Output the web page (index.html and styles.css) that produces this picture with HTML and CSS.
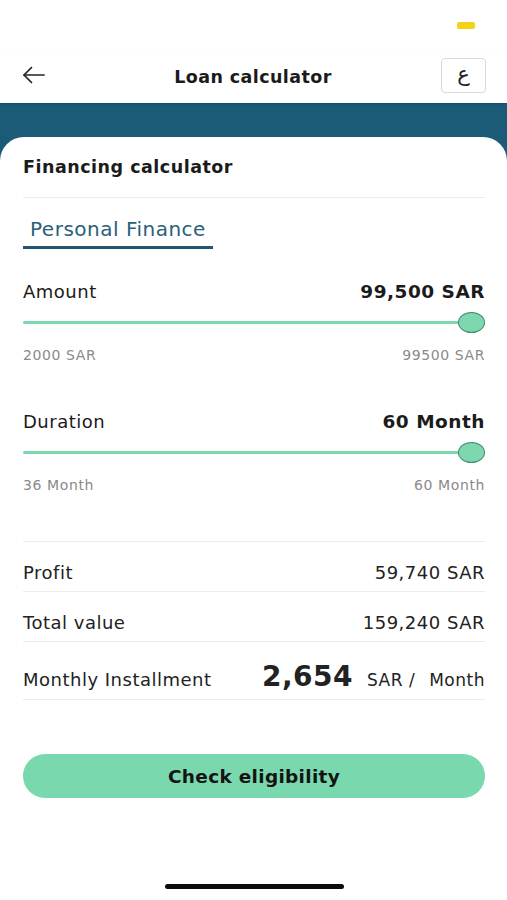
FILE: index.html
```html
<!DOCTYPE html>
<html lang="en">
<head>
    <meta charset="UTF-8">
    <meta name="viewport" content="width=device-width, initial-scale=1.0">
    <title>Loan calculator</title>
    <link rel="stylesheet" href="styles.css">
</head>
<body>
    <div class="status-bar">
        <span class="battery"></span>
    </div>

    <header class="top-bar">
        <button class="back-btn" aria-label="Back">
            <svg width="24" height="18" viewBox="0 0 24 18" fill="none" stroke="#222" stroke-width="1.7" stroke-linecap="round" stroke-linejoin="round">
                <path d="M22 9H2"/>
                <path d="M9.5 1.5L2 9l7.5 7.5"/>
            </svg>
        </button>
        <h1 class="title">Loan calculator</h1>
        <button class="lang-btn">ع</button>
    </header>

    <div class="hero">
        <main class="card">
            <h2 class="card-title">Financing calculator</h2>

            <div class="tabs">
                <span class="tab active">Personal Finance</span>
            </div>

            <section class="field">
                <div class="field-head">
                    <span class="field-label">Amount</span>
                    <span class="field-value">99,500 SAR</span>
                </div>
                <div class="slider">
                    <div class="track"></div>
                    <div class="thumb"></div>
                </div>
                <div class="range-labels">
                    <span>2000 SAR</span>
                    <span>99500 SAR</span>
                </div>
            </section>

            <section class="field field-second">
                <div class="field-head">
                    <span class="field-label">Duration</span>
                    <span class="field-value">60 Month</span>
                </div>
                <div class="slider">
                    <div class="track"></div>
                    <div class="thumb"></div>
                </div>
                <div class="range-labels">
                    <span>36 Month</span>
                    <span>60 Month</span>
                </div>
            </section>

            <div class="summary">
                <div class="summary-row">
                    <span>Profit</span>
                    <span>59,740 SAR</span>
                </div>
                <div class="summary-row">
                    <span>Total value</span>
                    <span>159,240 SAR</span>
                </div>
                <div class="summary-row installment">
                    <span>Monthly Installment</span>
                    <span class="installment-value">
                        <strong>2,654</strong>
                        <span class="unit">SAR /</span>
                        <span class="unit">Month</span>
                    </span>
                </div>
            </div>

            <button class="primary-btn">Check eligibility</button>

            <div class="home-indicator"></div>
        </main>
    </div>
</body>
</html>
```

FILE: styles.css
```css
* {
    box-sizing: border-box;
}

body {
    margin: 0;
    padding: 0;
    width: 507px;
    height: 900px;
    overflow: hidden;
    background-color: #fff;
    color: #1b1b1b;
    font-family: 'DejaVu Sans', sans-serif;
    letter-spacing: 0.5px;
}

button {
    font-family: inherit;
    letter-spacing: inherit;
    cursor: pointer;
}

.status-bar {
    height: 50px;
    display: flex;
    justify-content: flex-end;
    padding: 22px 32px 0 0;
}

.battery {
    width: 18px;
    height: 7px;
    border-radius: 2px;
    background-color: #f4d316;
}

.top-bar {
    position: relative;
    z-index: 1;
    height: 53px;
    display: grid;
    grid-template-columns: 1fr auto 1fr;
    align-items: center;
    padding: 0 21px 0 20px;
    background-color: #fff;
    box-shadow: 0 1px 2px rgba(0, 0, 0, 0.18);
}

.back-btn {
    justify-self: start;
    width: 28px;
    height: 28px;
    padding: 0;
    display: flex;
    align-items: center;
    justify-content: center;
    border: none;
    background: none;
    margin-top: -4px;
}

.title {
    margin: 0;
    font-size: 17.5px;
    font-weight: 700;
    color: #1b1b1b;
    letter-spacing: 0.4px;
}

.lang-btn {
    justify-self: end;
    width: 45px;
    height: 35px;
    padding: 0 0 3px;
    border: 1px solid #d9d9d9;
    border-radius: 4px;
    background-color: #fff;
    font-size: 21px;
    color: #222;
    margin-top: -2px;
    letter-spacing: 0;
}

.hero {
    background-color: #1b5b78;
    padding-top: 34px;
}

.card {
    min-height: 763px;
    background-color: #fff;
    border-radius: 24px 24px 0 0;
    padding: 0 22px 0 23px;
}

.card-title {
    margin: 0;
    padding: 18px 0 18px;
    font-size: 17.5px;
    line-height: 24px;
    font-weight: 700;
    border-bottom: 1px solid #ececec;
}

.tabs {
    display: flex;
    padding-top: 18px;
}

.tab {
    padding: 0 7px 4px;
    font-size: 20px;
    line-height: 26px;
    color: #2b6079;
}

.tab.active {
    border-bottom: 3px solid #22566e;
}

.field {
    margin-top: 32px;
}

.field-second {
    margin-top: 47px;
}

.field-head {
    display: flex;
    justify-content: space-between;
    align-items: center;
    line-height: 22px;
    font-size: 18px;
}

.field-value {
    font-weight: 700;
    font-size: 18.5px;
}

.slider {
    margin-top: 7px;
    height: 24px;
    display: flex;
    align-items: center;
}

.track {
    flex: 1;
    height: 3px;
    border-radius: 2px;
    background-color: #7dd8b0;
}

.thumb {
    flex: none;
    width: 27px;
    height: 21px;
    margin-left: -2px;
    border-radius: 50%;
    background-color: #7dd8b0;
    border: 1.5px solid #3f8a68;
}

.range-labels {
    margin-top: 12px;
    display: flex;
    justify-content: space-between;
    font-size: 14px;
    line-height: 18px;
    letter-spacing: 0.6px;
    color: #8a8a8a;
}

.summary {
    margin-top: 47px;
    border-top: 1px solid #ececec;
}

.summary-row {
    display: flex;
    justify-content: space-between;
    align-items: baseline;
    padding: 20px 0 8px;
    font-size: 18px;
    line-height: 21px;
    color: #222;
    border-bottom: 1px solid #ececec;
}

.summary-row.installment {
    padding: 20px 0 7px;
}

.installment-value {
    display: flex;
    align-items: baseline;
}

.installment-value strong {
    font-size: 28px;
    line-height: 30px;
    font-weight: 700;
    margin-right: 14px;
}

.unit {
    font-size: 17px;
    margin-left: 14px;
}

.unit:first-of-type {
    margin-left: 0;
}

.primary-btn {
    display: block;
    width: 100%;
    height: 44px;
    margin-top: 54px;
    border: none;
    border-radius: 22px;
    background-color: #79d8ae;
    color: #141414;
    font-size: 18.5px;
    font-weight: 700;
    letter-spacing: 0.3px;
}

.home-indicator {
    width: 179px;
    height: 5px;
    margin: 86px auto 0;
    border-radius: 3px;
    background-color: #0c0c0c;
}
```
